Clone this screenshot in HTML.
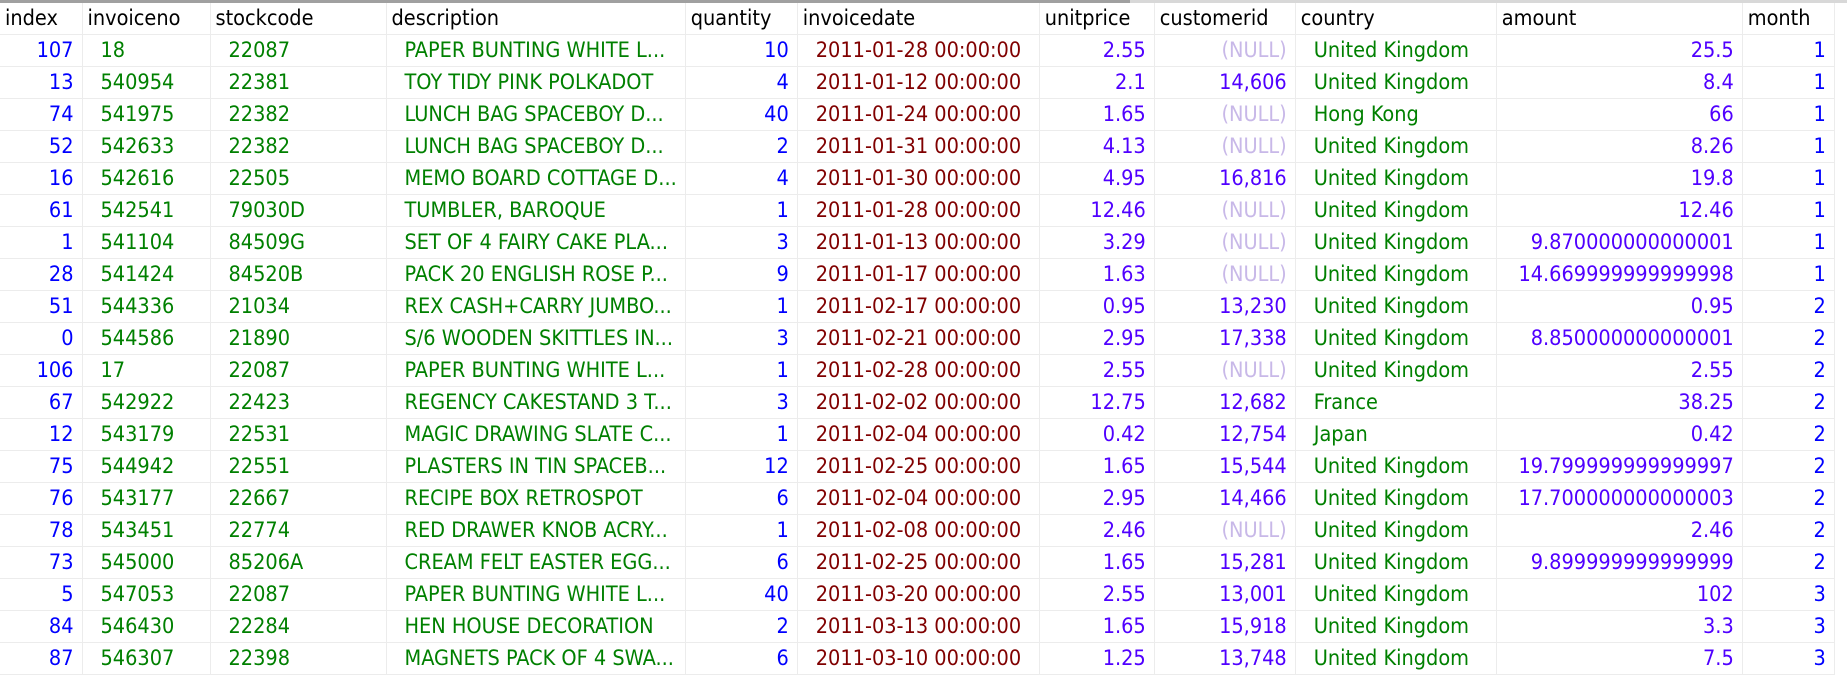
<!DOCTYPE html>
<html><head><meta charset="utf-8"><style>
html,body{margin:0;padding:0;background:#fff;width:1847px;height:652px;overflow:hidden}
.top{position:absolute;left:0;top:0;height:3px;width:1847px;background:#d8d8d8}
.top2{position:absolute;left:0;top:0;height:3px;width:1130px;background:#a0a0a0}
table{position:absolute;left:0;top:3px;border-collapse:collapse;table-layout:fixed;font-family:"DejaVu Sans Condensed","Liberation Sans",sans-serif;font-size:21.5px}
td,th{height:31px;padding:0;border-right:1px solid #ececec;border-bottom:1px solid #ececec;white-space:nowrap;overflow:hidden}
th{font-weight:normal;text-align:left;padding-left:5px;color:#000;height:31px}
td{padding:0 8px 0 18px}
.r{text-align:right;padding:0 8px 0 0}
.b{color:#0000ff}.g{color:#008000}.d{color:#800000}.v{color:#5000ff}.n{color:#c8b8e8}
</style></head><body>
<div class="top"></div><div class="top2"></div>
<table>
<colgroup><col style="width:82px"><col style="width:128px"><col style="width:176px"><col style="width:297px"><col style="width:112px"><col style="width:242px"><col style="width:115px"><col style="width:141px"><col style="width:201px"><col style="width:246px"><col style="width:92px"></colgroup>
<tr><th>index</th><th>invoiceno</th><th>stockcode</th><th>description</th><th>quantity</th><th>invoicedate</th><th>unitprice</th><th>customerid</th><th>country</th><th>amount</th><th>month</th></tr>
<tr><td class="r b">107</td><td class="g">18</td><td class="g">22087</td><td class="g">PAPER BUNTING WHITE L...</td><td class="r b">10</td><td class="d">2011-01-28 00:00:00</td><td class="r v">2.55</td><td class="r n">(NULL)</td><td class="g">United Kingdom</td><td class="r v">25.5</td><td class="r b">1</td></tr>
<tr><td class="r b">13</td><td class="g">540954</td><td class="g">22381</td><td class="g">TOY TIDY PINK POLKADOT</td><td class="r b">4</td><td class="d">2011-01-12 00:00:00</td><td class="r v">2.1</td><td class="r v">14,606</td><td class="g">United Kingdom</td><td class="r v">8.4</td><td class="r b">1</td></tr>
<tr><td class="r b">74</td><td class="g">541975</td><td class="g">22382</td><td class="g">LUNCH BAG SPACEBOY D...</td><td class="r b">40</td><td class="d">2011-01-24 00:00:00</td><td class="r v">1.65</td><td class="r n">(NULL)</td><td class="g">Hong Kong</td><td class="r v">66</td><td class="r b">1</td></tr>
<tr><td class="r b">52</td><td class="g">542633</td><td class="g">22382</td><td class="g">LUNCH BAG SPACEBOY D...</td><td class="r b">2</td><td class="d">2011-01-31 00:00:00</td><td class="r v">4.13</td><td class="r n">(NULL)</td><td class="g">United Kingdom</td><td class="r v">8.26</td><td class="r b">1</td></tr>
<tr><td class="r b">16</td><td class="g">542616</td><td class="g">22505</td><td class="g">MEMO BOARD COTTAGE D...</td><td class="r b">4</td><td class="d">2011-01-30 00:00:00</td><td class="r v">4.95</td><td class="r v">16,816</td><td class="g">United Kingdom</td><td class="r v">19.8</td><td class="r b">1</td></tr>
<tr><td class="r b">61</td><td class="g">542541</td><td class="g">79030D</td><td class="g">TUMBLER, BAROQUE</td><td class="r b">1</td><td class="d">2011-01-28 00:00:00</td><td class="r v">12.46</td><td class="r n">(NULL)</td><td class="g">United Kingdom</td><td class="r v">12.46</td><td class="r b">1</td></tr>
<tr><td class="r b">1</td><td class="g">541104</td><td class="g">84509G</td><td class="g">SET OF 4 FAIRY CAKE PLA...</td><td class="r b">3</td><td class="d">2011-01-13 00:00:00</td><td class="r v">3.29</td><td class="r n">(NULL)</td><td class="g">United Kingdom</td><td class="r v">9.870000000000001</td><td class="r b">1</td></tr>
<tr><td class="r b">28</td><td class="g">541424</td><td class="g">84520B</td><td class="g">PACK 20 ENGLISH ROSE P...</td><td class="r b">9</td><td class="d">2011-01-17 00:00:00</td><td class="r v">1.63</td><td class="r n">(NULL)</td><td class="g">United Kingdom</td><td class="r v">14.669999999999998</td><td class="r b">1</td></tr>
<tr><td class="r b">51</td><td class="g">544336</td><td class="g">21034</td><td class="g">REX CASH+CARRY JUMBO...</td><td class="r b">1</td><td class="d">2011-02-17 00:00:00</td><td class="r v">0.95</td><td class="r v">13,230</td><td class="g">United Kingdom</td><td class="r v">0.95</td><td class="r b">2</td></tr>
<tr><td class="r b">0</td><td class="g">544586</td><td class="g">21890</td><td class="g">S/6 WOODEN SKITTLES IN...</td><td class="r b">3</td><td class="d">2011-02-21 00:00:00</td><td class="r v">2.95</td><td class="r v">17,338</td><td class="g">United Kingdom</td><td class="r v">8.850000000000001</td><td class="r b">2</td></tr>
<tr><td class="r b">106</td><td class="g">17</td><td class="g">22087</td><td class="g">PAPER BUNTING WHITE L...</td><td class="r b">1</td><td class="d">2011-02-28 00:00:00</td><td class="r v">2.55</td><td class="r n">(NULL)</td><td class="g">United Kingdom</td><td class="r v">2.55</td><td class="r b">2</td></tr>
<tr><td class="r b">67</td><td class="g">542922</td><td class="g">22423</td><td class="g">REGENCY CAKESTAND 3 T...</td><td class="r b">3</td><td class="d">2011-02-02 00:00:00</td><td class="r v">12.75</td><td class="r v">12,682</td><td class="g">France</td><td class="r v">38.25</td><td class="r b">2</td></tr>
<tr><td class="r b">12</td><td class="g">543179</td><td class="g">22531</td><td class="g">MAGIC DRAWING SLATE C...</td><td class="r b">1</td><td class="d">2011-02-04 00:00:00</td><td class="r v">0.42</td><td class="r v">12,754</td><td class="g">Japan</td><td class="r v">0.42</td><td class="r b">2</td></tr>
<tr><td class="r b">75</td><td class="g">544942</td><td class="g">22551</td><td class="g">PLASTERS IN TIN SPACEB...</td><td class="r b">12</td><td class="d">2011-02-25 00:00:00</td><td class="r v">1.65</td><td class="r v">15,544</td><td class="g">United Kingdom</td><td class="r v">19.799999999999997</td><td class="r b">2</td></tr>
<tr><td class="r b">76</td><td class="g">543177</td><td class="g">22667</td><td class="g">RECIPE BOX RETROSPOT</td><td class="r b">6</td><td class="d">2011-02-04 00:00:00</td><td class="r v">2.95</td><td class="r v">14,466</td><td class="g">United Kingdom</td><td class="r v">17.700000000000003</td><td class="r b">2</td></tr>
<tr><td class="r b">78</td><td class="g">543451</td><td class="g">22774</td><td class="g">RED DRAWER KNOB ACRY...</td><td class="r b">1</td><td class="d">2011-02-08 00:00:00</td><td class="r v">2.46</td><td class="r n">(NULL)</td><td class="g">United Kingdom</td><td class="r v">2.46</td><td class="r b">2</td></tr>
<tr><td class="r b">73</td><td class="g">545000</td><td class="g">85206A</td><td class="g">CREAM FELT EASTER EGG...</td><td class="r b">6</td><td class="d">2011-02-25 00:00:00</td><td class="r v">1.65</td><td class="r v">15,281</td><td class="g">United Kingdom</td><td class="r v">9.899999999999999</td><td class="r b">2</td></tr>
<tr><td class="r b">5</td><td class="g">547053</td><td class="g">22087</td><td class="g">PAPER BUNTING WHITE L...</td><td class="r b">40</td><td class="d">2011-03-20 00:00:00</td><td class="r v">2.55</td><td class="r v">13,001</td><td class="g">United Kingdom</td><td class="r v">102</td><td class="r b">3</td></tr>
<tr><td class="r b">84</td><td class="g">546430</td><td class="g">22284</td><td class="g">HEN HOUSE DECORATION</td><td class="r b">2</td><td class="d">2011-03-13 00:00:00</td><td class="r v">1.65</td><td class="r v">15,918</td><td class="g">United Kingdom</td><td class="r v">3.3</td><td class="r b">3</td></tr>
<tr><td class="r b">87</td><td class="g">546307</td><td class="g">22398</td><td class="g">MAGNETS PACK OF 4 SWA...</td><td class="r b">6</td><td class="d">2011-03-10 00:00:00</td><td class="r v">1.25</td><td class="r v">13,748</td><td class="g">United Kingdom</td><td class="r v">7.5</td><td class="r b">3</td></tr>
</table>
</body></html>
